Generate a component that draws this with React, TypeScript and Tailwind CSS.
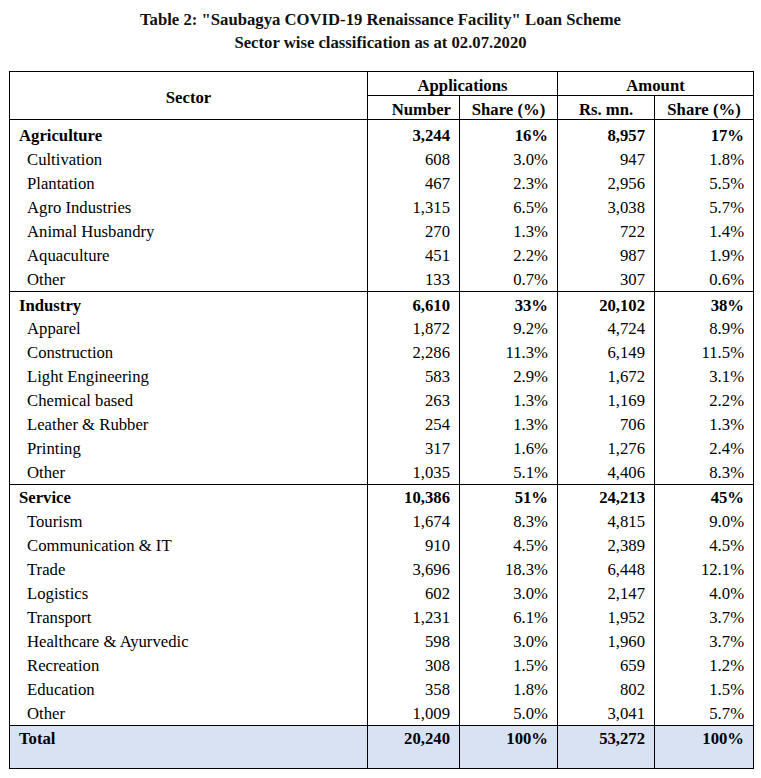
import React from "react";

type Row = [string, string, string, string, string];

const sections: { head: Row; items: Row[]; headH: string; headPt: string }[] = [
  {
    headH: "h-[27px]",
    headPt: "pt-[5px]",
    head: ["Agriculture", "3,244", "16%", "8,957", "17%"],
    items: [
      ["Cultivation", "608", "3.0%", "947", "1.8%"],
      ["Plantation", "467", "2.3%", "2,956", "5.5%"],
      ["Agro Industries", "1,315", "6.5%", "3,038", "5.7%"],
      ["Animal Husbandry", "270", "1.3%", "722", "1.4%"],
      ["Aquaculture", "451", "2.2%", "987", "1.9%"],
      ["Other", "133", "0.7%", "307", "0.6%"],
    ],
  },
  {
    headH: "h-[24px]",
    headPt: "pt-[3px]",
    head: ["Industry", "6,610", "33%", "20,102", "38%"],
    items: [
      ["Apparel", "1,872", "9.2%", "4,724", "8.9%"],
      ["Construction", "2,286", "11.3%", "6,149", "11.5%"],
      ["Light Engineering", "583", "2.9%", "1,672", "3.1%"],
      ["Chemical based", "263", "1.3%", "1,169", "2.2%"],
      ["Leather & Rubber", "254", "1.3%", "706", "1.3%"],
      ["Printing", "317", "1.6%", "1,276", "2.4%"],
      ["Other", "1,035", "5.1%", "4,406", "8.3%"],
    ],
  },
  {
    headH: "h-[25px]",
    headPt: "pt-[2px]",
    head: ["Service", "10,386", "51%", "24,213", "45%"],
    items: [
      ["Tourism", "1,674", "8.3%", "4,815", "9.0%"],
      ["Communication & IT", "910", "4.5%", "2,389", "4.5%"],
      ["Trade", "3,696", "18.3%", "6,448", "12.1%"],
      ["Logistics", "602", "3.0%", "2,147", "4.0%"],
      ["Transport", "1,231", "6.1%", "1,952", "3.7%"],
      ["Healthcare & Ayurvedic", "598", "3.0%", "1,960", "3.7%"],
      ["Recreation", "308", "1.5%", "659", "1.2%"],
      ["Education", "358", "1.8%", "802", "1.5%"],
      ["Other", "1,009", "5.0%", "3,041", "5.7%"],
    ],
  },
];

const vb = "border-l border-r border-black align-top";

export default function App() {
  return (
    <div
      className="w-[761px] h-[778px] bg-white text-black"
      style={{ fontFamily: '"Liberation Serif", "Times New Roman", serif' }}
    >
      <div className="pt-[8px] text-center font-bold text-[16.7px] leading-[23px] text-[#111]">
        <div>Table 2: "Saubagya COVID-19 Renaissance Facility" Loan Scheme</div>
        <div>Sector wise classification as at 02.07.2020</div>
      </div>
      <table className="ml-[9px] mt-[17px] w-[744px] table-fixed border-collapse border border-black text-[16.7px]">
        <colgroup>
          <col className="w-[358px]" />
          <col className="w-[92px]" />
          <col className="w-[98px]" />
          <col className="w-[97px]" />
          <col className="w-[99px]" />
        </colgroup>
        <thead>
          <tr className="h-[24px] font-bold">
            <th rowSpan={2} className="border border-black text-center align-middle pt-[4px] leading-[20px]">
              Sector
            </th>
            <th colSpan={2} className="border border-black text-center align-top pt-[4px] leading-[19px]">
              Applications
            </th>
            <th colSpan={2} className="border border-black text-center align-top pt-[4px] leading-[19px]">
              Amount
            </th>
          </tr>
          <tr className="h-[24px] font-bold">
            <th className="border border-black text-right pr-[8px] align-top pt-[5px] leading-[18px]">Number</th>
            <th className="border border-black text-center align-top pt-[5px] leading-[18px]">Share (%)</th>
            <th className="border border-black text-center align-top pt-[5px] leading-[18px]">Rs. mn.</th>
            <th className="border border-black text-center align-top pt-[5px] leading-[18px]">Share (%)</th>
          </tr>
        </thead>
        {sections.map((s, si) => (
          <tbody key={si} className="border-t border-b border-black">
            <tr className={`${s.headH} font-bold`}>
              <td className={`${vb} pl-[9px] ${s.headPt} leading-[21px]`}>{s.head[0]}</td>
              {s.head.slice(1).map((v, i) => (
                <td key={i} className={`${vb} text-right pr-[9px] ${s.headPt} leading-[21px]`}>
                  {v}
                </td>
              ))}
            </tr>
            {s.items.map((r, ri) => (
              <tr key={ri} className="h-[24px]">
                <td className={`${vb} pl-[17px] pt-[2px] leading-[22px]`}>{r[0]}</td>
                {r.slice(1).map((v, i) => (
                  <td key={i} className={`${vb} text-right pr-[9px] pt-[2px] leading-[22px]`}>
                    {v}
                  </td>
                ))}
              </tr>
            ))}
          </tbody>
        ))}
        <tbody className="border-t border-black">
          <tr className="h-[43px] font-bold bg-[#d9e2f3]">
            <td className={`${vb} pl-[9px] pt-[2px] leading-[22px]`}>Total</td>
            {["20,240", "100%", "53,272", "100%"].map((v, i) => (
              <td key={i} className={`${vb} text-right pr-[9px] pt-[2px] leading-[22px]`}>
                {v}
              </td>
            ))}
          </tr>
        </tbody>
      </table>
    </div>
  );
}
